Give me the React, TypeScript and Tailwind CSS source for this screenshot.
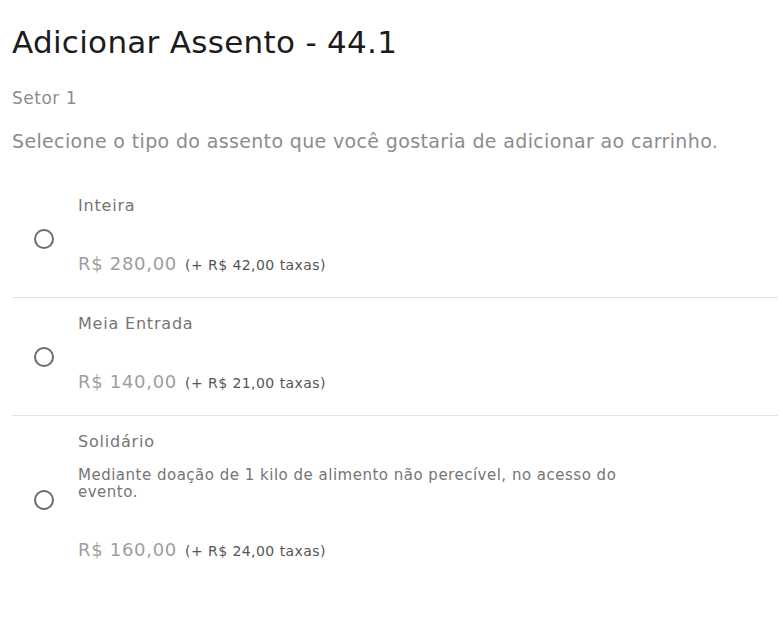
import { useState } from "react";

type SeatType = {
  id: string;
  name: string;
  description?: string;
  price: string;
  fee: string;
};

const seatTypes: SeatType[] = [
  { id: "inteira", name: "Inteira", price: "R$ 280,00", fee: "(+ R$ 42,00 taxas)" },
  { id: "meia", name: "Meia Entrada", price: "R$ 140,00", fee: "(+ R$ 21,00 taxas)" },
  {
    id: "solidario",
    name: "Solidário",
    description:
      "Mediante doação de 1 kilo de alimento não perecível, no acesso do evento.",
    price: "R$ 160,00",
    fee: "(+ R$ 24,00 taxas)",
  },
];

function App() {
  const [selected, setSelected] = useState<string | null>(null);

  return (
    <div
      className="min-h-screen bg-white pl-3 pr-[5px] pt-[22px]"
      style={{ fontFamily: '"DejaVu Sans", sans-serif' }}
    >
      <h1 className="text-[31px] leading-[40px] tracking-[0.3px] text-[#1c1c1c]">
        Adicionar Assento - 44.1
      </h1>

      <p className="mt-[26px] text-[17px] leading-[20px] tracking-[0.5px] text-[#8c8c8c]">
        Setor 1
      </p>

      <p className="mt-[21px] text-[19px] leading-[24px] tracking-[0.35px] text-[#8c8c8c]">
        Selecione o tipo do assento que você gostaria de adicionar ao carrinho.
      </p>

      <div className="mt-[27px]">
        {seatTypes.map((seat, i) => (
          <label
            key={seat.id}
            className={
              "flex cursor-pointer items-center pl-[22px] " +
              (i < seatTypes.length - 1 ? "border-b border-[#e2e2e2]" : "")
            }
          >
            <input
              type="radio"
              name="seat"
              className="sr-only"
              checked={selected === seat.id}
              onChange={() => setSelected(seat.id)}
            />
            <span className="flex h-5 w-5 shrink-0 items-center justify-center rounded-full border-2 border-[#6b6b6b]">
              {selected === seat.id && (
                <span className="h-2.5 w-2.5 rounded-full bg-[#6b6b6b]" />
              )}
            </span>

            <div className="pl-6 pt-4 pb-[21px]">
              <p className="text-[16px] leading-[20px] tracking-[0.8px] text-[#757575]">
                {seat.name}
              </p>

              {seat.description && (
                <p className="mt-[15px] max-w-[550px] text-[15px] leading-[17px] tracking-[0.5px] text-[#757575]">
                  {seat.description}
                </p>
              )}

              <p
                className={
                  "text-[18px] leading-[24px] tracking-[0.7px] text-[#9e9e9e] " +
                  (seat.description ? "mt-[37px]" : "mt-[36px]")
                }
              >
                {seat.price}
                <span className="ml-2 text-[14px] leading-[14px] tracking-[0.45px] text-[#555]">
                  {seat.fee}
                </span>
              </p>
            </div>
          </label>
        ))}
      </div>
    </div>
  );
}

export default App;
